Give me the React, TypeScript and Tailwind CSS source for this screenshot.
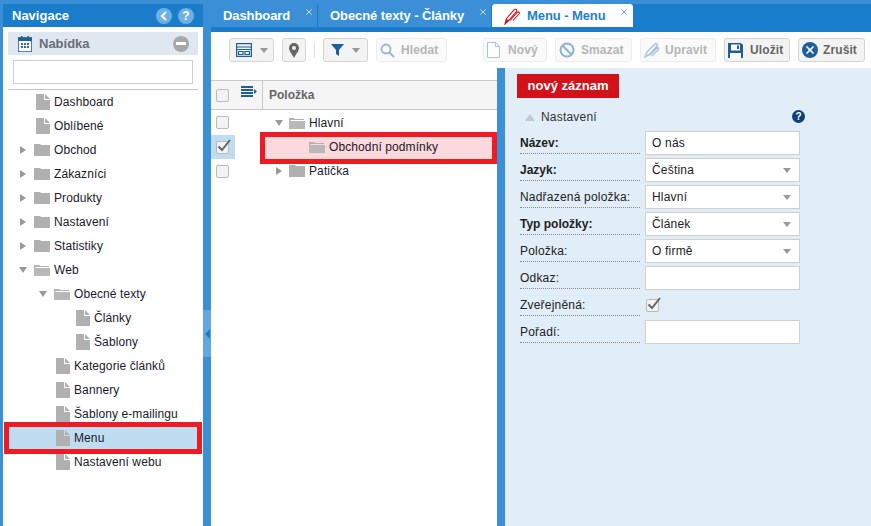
import type { ReactNode } from 'react';
import { X } from 'lucide-react';

const font = { fontFamily: '"Liberation Sans", Arial, sans-serif' };

function FileIcon() {
  return (
    <svg width="14" height="16" viewBox="0 0 14 16" className="shrink-0">
      <path d="M0 0h8v6h6v10H0z" fill="#b0b0b0" />
      <path d="M9 0l5 5H9z" fill="#b0b0b0" />
    </svg>
  );
}

function FolderIcon({ open }: { open?: boolean }) {
  if (open) {
    return (
      <svg width="16" height="12" viewBox="0 0 16 12" className="shrink-0">
        <path d="M0 1h5l1 1h9v1H2L0 5z" fill="#b0b0b0" />
        <path d="M0 4h16v8H0z" fill="#b8b8b8" />
      </svg>
    );
  }
  return (
    <svg width="16" height="12" viewBox="0 0 16 12" className="shrink-0">
      <path d="M0 0h6l1 1h9v11H0z" fill="#b0b0b0" />
    </svg>
  );
}

function Arrow({ open }: { open?: boolean }) {
  return (
    <svg width="10" height="10" viewBox="0 0 10 10" className="shrink-0">
      {open ? <path d="M1 2h8L5 8z" fill="#999" /> : <path d="M2 1l6 4-6 4z" fill="#999" />}
    </svg>
  );
}

function Check({ on }: { on?: boolean }) {
  return (
    <span className="relative block w-[13px] h-[13px] border border-[#bbb] rounded-[2px] bg-[#f2f2f2] shrink-0">
      {on && (
        <svg width="15" height="14" viewBox="0 0 15 14" className="absolute left-0 top-[-3px]">
          <path d="M1.500 7.500l3.500 3.500 8-10" fill="none" stroke="#666" strokeWidth="2" />
        </svg>
      )}
    </span>
  );
}

type Item = { label: string; pad: number; kind: 'file' | 'closed' | 'open' };

const tree: Item[] = [
  { label: 'Dashboard', pad: 33, kind: 'file' },
  { label: 'Oblíbené', pad: 33, kind: 'file' },
  { label: 'Obchod', pad: 15, kind: 'closed' },
  { label: 'Zákazníci', pad: 15, kind: 'closed' },
  { label: 'Produkty', pad: 15, kind: 'closed' },
  { label: 'Nastavení', pad: 15, kind: 'closed' },
  { label: 'Statistiky', pad: 15, kind: 'closed' },
  { label: 'Web', pad: 15, kind: 'open' },
  { label: 'Obecné texty', pad: 35, kind: 'open' },
  { label: 'Články', pad: 73, kind: 'file' },
  { label: 'Šablony', pad: 73, kind: 'file' },
  { label: 'Kategorie článků', pad: 53, kind: 'file' },
  { label: 'Bannery', pad: 53, kind: 'file' },
  { label: 'Šablony e-mailingu', pad: 53, kind: 'file' },
  { label: 'Menu', pad: 53, kind: 'file' },
  { label: 'Nastavení webu', pad: 53, kind: 'file' },
];

function TreeRow({ item }: { item: Item }) {
  const selected = item.label === 'Menu';
  return (
    <div
      className={
        selected
          ? 'flex items-center h-[32px] my-[-4px] mx-[1px] border-[5px] border-[#ed1c24] bg-[#c0dcf1] relative'
          : 'flex items-center h-[24px]'
      }
    >
      <div className="flex items-center" style={{ paddingLeft: selected ? item.pad - 6 : item.pad }}>
        {item.kind === 'file' ? (
          <>
            <FileIcon />
            <span className="ml-[4px] text-[12px] tracking-[0.1px] text-[#1a1a2a]">{item.label}</span>
          </>
        ) : (
          <>
            <Arrow open={item.kind === 'open'} />
            <span className="ml-[6px]">
              <FolderIcon open={item.kind === 'open'} />
            </span>
            <span className="ml-[4px] text-[12px] tracking-[0.1px] text-[#1a1a2a]">{item.label}</span>
          </>
        )}
      </div>
    </div>
  );
}

function ToolButton({
  children,
  disabled,
  className,
}: {
  children: ReactNode;
  disabled?: boolean;
  className: string;
}) {
  return (
    <div
      className={
        'flex items-center h-[24px] rounded-[3px] border text-[12px] font-bold tracking-[0.1px] ' +
        (disabled
          ? 'border-[#ececec] bg-[#fafafa] text-[#b5b5b5] '
          : 'border-[#d4d4d4] bg-[#f3f3f3] text-[#666] ') +
        className
      }
    >
      {children}
    </div>
  );
}

function Caret() {
  return (
    <svg width="8" height="5" viewBox="0 0 8 5">
      <path d="M0 0h8L4 5z" fill="#999" />
    </svg>
  );
}

function Tab({ label, w }: { label: string; w: string }) {
  return (
    <div className={'relative flex items-center h-[23px] bg-[#3a8fd6] text-white font-bold text-[13px] tracking-[-0.08px] pl-[12px] ' + w}>
      {label}
      <X size={10} strokeWidth={2} className="absolute right-[3px] top-[3px] text-[#e4f0fa]" />
    </div>
  );
}

type Field = { label: string; bold?: boolean; value?: string; select?: boolean; check?: boolean };

const fields: Field[] = [
  { label: 'Název:', bold: true, value: 'O nás' },
  { label: 'Jazyk:', bold: true, value: 'Čeština', select: true },
  { label: 'Nadřazená položka:', value: 'Hlavní', select: true },
  { label: 'Typ položky:', bold: true, value: 'Článek', select: true },
  { label: 'Položka:', value: 'O firmě', select: true },
  { label: 'Odkaz:', value: '' },
  { label: 'Zveřejněná:', check: true },
  { label: 'Pořadí:', value: '' },
];

function FormRow({ f }: { f: Field }) {
  return (
    <div className="flex h-[27px]">
      <div
        className={
          'w-[120px] h-[22px] mt-[1px] border-b border-dotted border-[#8a8a8a] flex items-center text-[12px] text-[#222] ' +
          (f.bold ? 'font-bold' : 'tracking-[0.2px]')
        }
      >
        {f.label}
      </div>
      {f.check ? (
        <div className="ml-[5px] pl-[1px] h-[24px] flex items-center">
          <Check on />
        </div>
      ) : (
        <div className="ml-[5px] w-[155px] h-[24px] bg-white border border-[#cfcfcf] flex items-center justify-between pl-[6px] pr-[8px] text-[12px] tracking-[0.2px] text-[#222]">
          <span>{f.value}</span>
          {f.select && <Caret />}
        </div>
      )}
    </div>
  );
}

export default function App() {
  return (
    <div className="w-[871px] h-[526px] overflow-hidden flex bg-[#3a8fd6] pt-[4px]" style={font}>
      {/* left navigation */}
      <div className="w-[200px] ml-[3px] h-[522px] bg-white flex flex-col shrink-0">
        <div className="h-[23px] bg-[#1a7dcc] flex items-center justify-between pl-[9px] pr-[9px] text-white font-bold text-[13px]">
          <span>Navigace</span>
          <div className="flex gap-[6px]">
            <span className="w-[16px] h-[16px] rounded-full bg-[#6fb0e4] flex items-center justify-center">
              <svg width="8" height="10" viewBox="0 0 8 10">
                <path d="M6 1L2 5l4 4" fill="none" stroke="#fff" strokeWidth="2.2" />
              </svg>
            </span>
            <span className="w-[16px] h-[16px] rounded-full bg-[#6fb0e4] flex items-center justify-center text-[12px] leading-none">
              ?
            </span>
          </div>
        </div>
        <div className="mx-[5px] mt-[5px] h-[23px] bg-[#dfe8f1] flex items-center pl-[10px] pr-[9px] justify-between">
          <div className="flex items-center">
            <svg width="14" height="16" viewBox="0 0 14 16">
              <path d="M0 2h14v14H0z" fill="#fff" stroke="#1f5f99" strokeWidth="1.6" />
              <path d="M0 1.500h14V5H0z" fill="#1f5f99" />
              <path d="M3 0h1.500v3H3zM9.500 0H11v3H9.500z" fill="#1f5f99" />
              <path d="M3 7h2v2H3zM6 7h2v2H6zM9 7h2v2H9zM3 10h2v2H3zM6 10h2v2H6zM9 10h2v2H9z" fill="#2a6ea8" />
            </svg>
            <span className="ml-[7px] text-[13px] font-bold text-[#6b6b78]">Nabídka</span>
          </div>
          <span className="w-[16px] h-[16px] rounded-full bg-[#a8a8a8] flex items-center justify-center">
            <span className="w-[10px] h-[3px] bg-white" />
          </span>
        </div>
        <div className="mx-[10px] mt-[5px] h-[24px] border border-[#cfcfcf] bg-white" />
        <div className="mx-[5px] mt-[5px] border-t border-[#c4c4c4]" />
        <div>
          {tree.map((item) => (
            <TreeRow key={item.label} item={item} />
          ))}
        </div>
      </div>

      {/* collapse bar */}
      <div className="w-[8px] shrink-0 flex flex-col pt-[306px]">
        <div className="h-[47px] bg-[#62a7e0] flex items-center justify-center">
          <svg width="5" height="10" viewBox="0 0 5 10">
            <path d="M5 0v10L0 5z" fill="#1a7dcc" />
          </svg>
        </div>
      </div>

      {/* main */}
      <div className="flex-1 flex flex-col min-w-0">
        <div className="h-[23px] flex bg-[#1a7dcc] gap-[1px]">
          <Tab label="Dashboard" w="w-[106px]" />
          <Tab label="Obecné texty - Články" w="w-[173px]" />
          <div className="relative h-[23px] w-[141px] bg-white rounded-t-[3px] flex items-center pl-[12px] text-[#1f7fd0] font-bold text-[13px] tracking-[-0.08px]">
            <svg width="17" height="18" viewBox="0 0 17 18" className="shrink-0 mr-[6px]">
              <path d="M1 17l1.500-5.500L10 3c1.500-1.500 3.500-.5 2.500 1.500L5 13z" fill="none" stroke="#d0141c" strokeWidth="1.100" />
              <path d="M6 13.500l7-8c2-1.500 3 0 2 1.500l-6 6.500" fill="none" stroke="#d0141c" strokeWidth="1.100" />
              <path d="M1 17l1.500-5 3 1.500z" fill="#d0141c" />
            </svg>
            Menu - Menu
            <X size={10} strokeWidth={2} className="absolute right-[4px] top-[3px] text-[#3a8fd6]" />
          </div>
        </div>
        <div className="h-[5px] bg-[#1a7dcc]" />

        <div className="h-[36px] bg-white flex items-center pl-[18px]">
          <ToolButton className="w-[45px] gap-[8px] justify-center">
            <svg width="16" height="14" viewBox="0 0 16 14" fill="none" stroke="#1f5f99" strokeWidth="1.2">
              <path d="M.6.6h14.800v12.800H.6zM.6 4h14.800M.6 6.500h14.800" />
              <path d="M2.500 8.500h4.500v3H2.500zM9 8.500h4.500v3H9z" />
            </svg>
            <Caret />
          </ToolButton>
          <ToolButton className="w-[24px] ml-[8px] justify-center">
            <svg width="10" height="15" viewBox="0 0 10 15">
              <path fillRule="evenodd" d="M5 0a5 5 0 0 1 5 5c0 3-3 6-5 10C3 11 0 8 0 5a5 5 0 0 1 5-5zm0 3a2 2 0 1 0 0 4 2 2 0 0 0 0-4z" fill="#666" />
            </svg>
          </ToolButton>
          <div className="w-px h-[14px] bg-[#ddd] ml-[8px]" />
          <ToolButton className="w-[45px] ml-[8px] gap-[8px] justify-center">
            <svg width="13" height="12" viewBox="0 0 13 12">
              <path d="M0 0h13L8 6v6L5 10V6z" fill="#1f5f99" />
            </svg>
            <Caret />
          </ToolButton>
          <ToolButton disabled className="w-[71px] ml-[8px] gap-[6px] pl-[3px]">
            <svg width="15" height="15" viewBox="0 0 15 15" fill="none" stroke="#8db7d8" strokeWidth="1.8">
              <circle cx="6" cy="6" r="4.500" />
              <path d="M9.500 9.500L14 14" />
            </svg>
            Hledat
          </ToolButton>
          <ToolButton disabled className="w-[64px] ml-[36px] gap-[8px] pl-[3px]">
            <svg width="13" height="16" viewBox="0 0 13 16" fill="#fff" stroke="#a5c4dc">
              <path d="M.5.500h8l4 4v11H.5zM8.500.500v4h4" />
            </svg>
            Nový
          </ToolButton>
          <ToolButton disabled className="w-[77px] ml-[8px] gap-[6px] pl-[3px]">
            <svg width="16" height="16" viewBox="0 0 16 16" fill="none" stroke="#8db2cf" strokeWidth="2">
              <circle cx="8" cy="8" r="6.500" />
              <path d="M3.500 3.500l9 9" />
            </svg>
            Smazat
          </ToolButton>
          <ToolButton disabled className="w-[76px] ml-[8px] gap-[5px] pl-[3px]">
            <svg width="16" height="16" viewBox="0 0 16 16" fill="none" stroke="#a5c4dc" strokeWidth="1.400">
              <path d="M1 15l2-5 8-8c1-1 3 0 2 2l-8 9zM6 13l7-7c2-1 2 1 1 2l-6 6" />
            </svg>
            Upravit
          </ToolButton>
          <ToolButton className="w-[66px] ml-[8px] gap-[7px] pl-[3px]">
            <svg width="15" height="15" viewBox="0 0 15 15">
              <path d="M0 0h13l2 2v13H0z" fill="#1f5f99" />
              <path d="M3 1.500h9v6H3z" fill="#fff" />
              <path d="M2 10h11v5H2z" fill="#fff" />
              <path d="M9 2.500h2V6H9z" fill="#1f5f99" />
            </svg>
            Uložit
          </ToolButton>
          <ToolButton className="w-[67px] ml-[8px] gap-[5px] pl-[3px]">
            <span className="w-[16px] h-[16px] rounded-full bg-[#1f5f99] flex items-center justify-center text-white">
              <X size={12} strokeWidth={3.5} />
            </span>
            Zrušit
          </ToolButton>
        </div>

        <div className="flex-1 flex min-h-0">
          {/* grid */}
          <div className="w-[286px] bg-white pt-[12px] shrink-0">
            <div className="h-[30px] flex items-center border-y border-[#c9c9c9] bg-[#f5f5f5]">
              <div className="w-[24px] pl-[5px]">
                <Check />
              </div>
              <div className="w-[28px] h-full flex items-start justify-center pt-[5px] border-r border-[#c9c9c9]">
                <svg width="16" height="11" viewBox="0 0 16 11">
                  <path d="M0 0h12v2H0zM0 3h12v2H0zM0 6h12v2H0zM0 9h12v2H0z" fill="#1f5f99" />
                  <path d="M13 3l3 2.500L13 8z" fill="#1f5f99" />
                </svg>
              </div>
              <span className="ml-[6px] text-[12px] font-bold text-[#666]">Položka</span>
            </div>
            <div className="h-[25px] flex items-center">
              <div className="w-[24px] pl-[5px]">
                <Check />
              </div>
              <span className="ml-[39px]">
                <Arrow open />
              </span>
              <span className="ml-[5px]">
                <FolderIcon open />
              </span>
              <span className="ml-[4px] text-[12px] tracking-[0.1px] text-[#1a1a2a]">Hlavní</span>
            </div>
            <div className="h-[24px] flex items-center relative">
              <div className="w-[24px] h-[24px] bg-[#c0dcf1] pl-[5px] flex items-center">
                <Check on />
              </div>
              <div className="absolute left-[49px] right-0 top-[-3px] h-[32px] pb-[2px] bg-[#fcd9dc] border-[5px] border-[#ed1c24] flex items-center pl-[44px]">
                <FolderIcon open />
                <span className="ml-[4px] text-[12px] tracking-[0.1px] text-[#1a1a2a]">Obchodní podmínky</span>
              </div>
            </div>
            <div className="h-[24px] flex items-center">
              <div className="w-[24px] pl-[5px]">
                <Check />
              </div>
              <span className="ml-[39px]">
                <Arrow />
              </span>
              <span className="ml-[5px]">
                <FolderIcon />
              </span>
              <span className="ml-[4px] text-[12px] tracking-[0.1px] text-[#1a1a2a]">Patička</span>
            </div>
          </div>

          {/* detail */}
          <div className="w-[8px] bg-[#3a8fd6] shrink-0" />
          <div className="flex-1 bg-[#e1edf7] pl-[12px] pt-[6px]">
            <div className="w-[102px] h-[24px] bg-[#d2121a] text-white font-bold text-[13px] flex items-center justify-center">
              nový záznam
            </div>
            <div className="flex items-center h-[24px] mt-[7px] pl-[8px] w-[288px] relative">
              <svg width="10" height="7" viewBox="0 0 10 7">
                <path d="M0 7h10L5 0z" fill="#c4c8cc" />
              </svg>
              <span className="ml-[6px] text-[12px] tracking-[0.2px] text-[#333]">Nastavení</span>
              <span className="absolute right-0 top-[5px] w-[13px] h-[13px] rounded-full bg-[#123f7a] text-white text-[10px] font-bold flex items-center justify-center">
                ?
              </span>
            </div>
            <div className="pl-[3px] mt-[2px]">
              {fields.map((f) => (
                <FormRow key={f.label} f={f} />
              ))}
            </div>
          </div>
        </div>
      </div>
    </div>
  );
}
